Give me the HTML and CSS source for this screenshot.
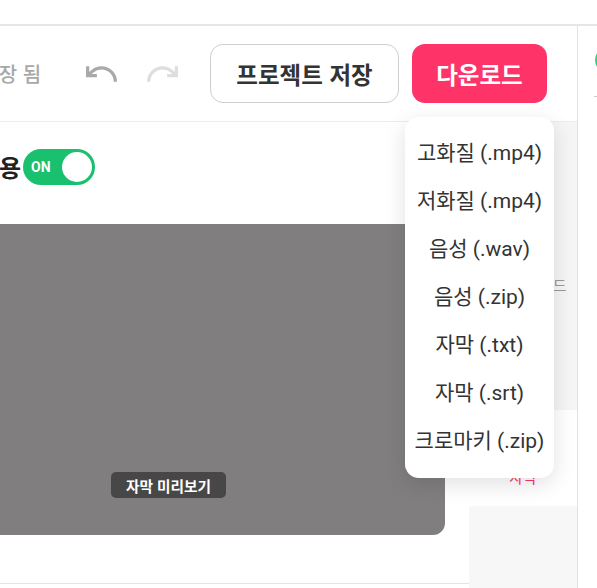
FILE: index.html
```html
<!DOCTYPE html>
<html lang="ko">
<head>
<meta charset="utf-8">
<title>Editor</title>
<link rel="stylesheet" href="styles.css">
</head>
<body>
<div class="topbar"></div>
<div class="app">
  <div class="main">
    <header class="header">
      <div class="history">
        <span class="status">자동 저장 됨</span>
        <button class="icon-btn undo" aria-label="실행 취소">
          <svg viewBox="1.5 5.5 21 13" width="33" height="20" fill="none" stroke="currentColor" stroke-width="2.1" stroke-linecap="butt" stroke-linejoin="miter"><path d="M3 7v6h6"/><path d="M21 17a9 9 0 0 0-9-9 9 9 0 0 0-6 2.3L3 13"/></svg>
        </button>
        <button class="icon-btn redo" aria-label="다시 실행">
          <svg viewBox="1.5 5.5 21 13" width="33" height="20" fill="none" stroke="currentColor" stroke-width="2.1" stroke-linecap="butt" stroke-linejoin="miter"><path d="M21 7v6h-6"/><path d="M3 17a9 9 0 0 1 9-9 9 9 0 0 1 6 2.3l3 2.7"/></svg>
        </button>
      </div>
      <div class="actions">
        <button class="btn btn-outline">프로젝트 저장</button>
        <div class="download">
          <button class="btn btn-primary">다운로드</button>
          <ul class="menu">
            <li>고화질 (.mp4)</li>
            <li>저화질 (.mp4)</li>
            <li>음성 (.wav)</li>
            <li>음성 (.zip)</li>
            <li>자막 (.txt)</li>
            <li>자막 (.srt)</li>
            <li>크로마키 (.zip)</li>
          </ul>
        </div>
      </div>
    </header>
    <div class="content">
      <section class="editor">
        <div class="title-row">
          <h2 class="title">자막 사용</h2>
          <div class="toggle"><span class="toggle-label">ON</span><span class="knob"></span></div>
        </div>
        <div class="preview">
          <span class="caption">자막 미리보기</span>
        </div>
      </section>
      <aside class="tabs">
        <div class="tab"><span>템플릿</span></div>
        <div class="tab"><span>텍스트 가이드</span></div>
        <div class="tab"><span>배경음악</span></div>
        <div class="tab active"><span>자막</span></div>
        <div class="tab-fill"></div>
      </aside>
    </div>
  </div>
  <div class="side">
    <span class="dot"></span>
    <span class="dash"></span>
  </div>
</div>
</body>
</html>
```

FILE: styles.css
```css
* {
  box-sizing: border-box;
  margin: 0;
  padding: 0;
}

html,
body {
  width: 597px;
  height: 588px;
  overflow: hidden;
  background: #fff;
}

body {
  font-family: Roboto, "Noto Sans CJK KR", sans-serif;
  color: #333;
}

.topbar {
  height: 26px;
  border-bottom: 2px solid #e4e7ea;
}

.app {
  display: flex;
  height: 562px;
}

.main {
  flex: none;
  width: 578px;
  border-right: 1px solid #e2e2e2;
  display: flex;
  flex-direction: column;
}

.header {
  flex: none;
  height: 96px;
  border-bottom: 1px solid #ececec;
  display: flex;
  align-items: center;
  padding-right: 30px;
}

.history {
  display: flex;
  align-items: center;
  margin-left: -62px;
}

.status {
  font-family: "Noto Sans CJK KR", sans-serif;
  font-size: 20px;
  font-weight: 500;
  color: #a8a8a8;
  white-space: nowrap;
}

.icon-btn {
  display: flex;
  background: none;
  border: none;
  padding: 0;
}

.undo {
  margin-left: 44px;
  color: #a9a9a9;
}

.redo {
  margin-left: 28px;
  color: #dedede;
}

.actions {
  margin-left: auto;
  display: flex;
  gap: 13px;
}

.btn {
  height: 59px;
  border-radius: 13px;
  display: flex;
  align-items: center;
  justify-content: center;
  font-family: "Noto Sans CJK KR", sans-serif;
  font-size: 23.5px;
  font-weight: 700;
}

.btn-outline {
  width: 189px;
  background: #fff;
  border: 1px solid #cfcfcf;
  color: #333;
}

.btn-primary {
  width: 135px;
  background: #fe3468;
  border: none;
  color: #fff;
}

.download {
  position: relative;
}

.menu {
  position: absolute;
  top: 73px;
  left: -7px;
  width: 149px;
  padding: 10px 0 15px;
  list-style: none;
  background: #fff;
  border-radius: 14px;
  box-shadow: 0 6px 22px rgba(0, 0, 0, 0.12);
  z-index: 10;
}

.menu li {
  height: 48px;
  display: flex;
  align-items: center;
  justify-content: center;
  font-size: 21px;
  color: #333;
  white-space: nowrap;
}

.content {
  flex: 1;
  display: flex;
}

.editor {
  flex: none;
  width: 469px;
  height: 462px;
  border-bottom: 1px solid #e4e4e4;
  padding: 27px 24px 0 0;
}

.title-row {
  display: flex;
  align-items: center;
  gap: 2px;
  height: 36px;
  margin-left: -74px;
}

.title {
  font-family: "Noto Sans CJK KR", sans-serif;
  font-size: 24px;
  font-weight: 700;
  color: #222;
  line-height: 1;
  white-space: nowrap;
}

.toggle {
  width: 72px;
  height: 36px;
  border-radius: 18px;
  background: #19c06e;
  display: flex;
  align-items: center;
  justify-content: space-between;
  padding: 0 3px 0 8px;
}

.toggle-label {
  font-family: Roboto, sans-serif;
  font-size: 14px;
  font-weight: 700;
  color: #fff;
}

.knob {
  width: 30px;
  height: 30px;
  border-radius: 50%;
  background: #fff;
}

.preview {
  margin-top: 39px;
  margin-left: -108px;
  width: 553px;
  height: 311px;
  background: #807e7f;
  border-radius: 12px;
  display: flex;
  align-items: flex-end;
  justify-content: center;
  padding-bottom: 37px;
}

.caption {
  height: 26px;
  padding: 0 15px;
  border-radius: 5px;
  background: #474747;
  color: #fff;
  font-family: "Noto Sans CJK KR", sans-serif;
  font-size: 14.7px;
  font-weight: 700;
  display: flex;
  align-items: center;
}

.tabs {
  flex: 1;
  display: flex;
  flex-direction: column;
}

.tab {
  flex: none;
  height: 96px;
  background: #f5f5f5;
  display: flex;
  justify-content: center;
  padding-top: 57px;
  font-family: "Noto Sans CJK KR", sans-serif;
  font-size: 15px;
  line-height: 20px;
  color: #999;
  white-space: nowrap;
}

.tab.active {
  background: #fff;
  color: #fe3468;
}

.tab-fill {
  flex: 1;
  background: #f7f7f7;
}

.side {
  flex: 1;
  padding: 22px 0 0 17px;
}

.dot {
  display: block;
  width: 24px;
  height: 24px;
  border-radius: 50%;
  background: #2fd07a;
}

.dash {
  display: block;
  margin: 24px 0 0 -1px;
  width: 20px;
  height: 1px;
  background: #cccccc;
}
```
